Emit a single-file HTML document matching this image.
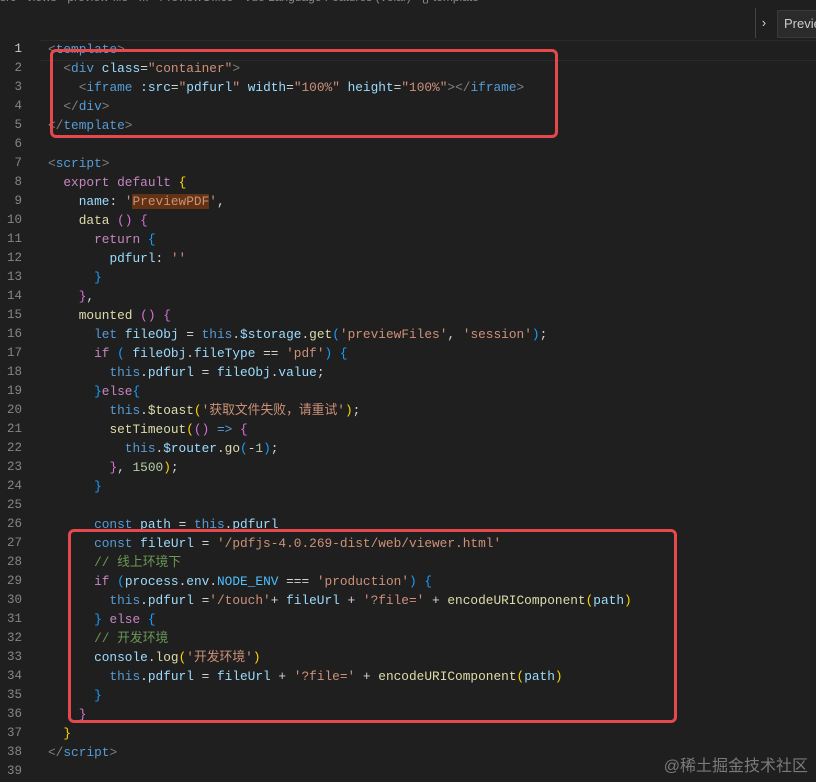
<!DOCTYPE html>
<html><head><meta charset="utf-8"><style>
body{margin:0;width:816px;height:782px;background:#1f1f1f;overflow:hidden;position:relative;font-family:"Liberation Mono","Noto Sans CJK SC",monospace;font-size:12.8px;}
.ln{position:absolute;left:0;width:22px;text-align:right;color:#858585;height:19px;line-height:19px;font-size:12.5px}
.c{position:absolute;left:48px;white-space:pre;color:#d4d4d4;height:19px;line-height:19px;}
.t{color:#808080}.tg{color:#569cd6}.a{color:#9cdcfe}.s{color:#ce9178}.k{color:#569cd6}.p{color:#c586c0}.f{color:#dcdcaa}.cm{color:#6a9955}.n{color:#b5cea8}.v{color:#9cdcfe}
.y{color:#ffd700}.m{color:#da70d6}.b{color:#179fff}
.box{position:absolute;border:3px solid #e5484d;border-radius:6px;}
</style></head><body>
<div style="position:absolute;left:0;top:-10px;color:#8a8a8a;font-family:'Liberation Sans',sans-serif;font-size:12px;white-space:nowrap">src › views › preview-file › ... › PreviewOffice › Vue Language Features (Volar) › {} template</div>
<div style="position:absolute;left:755px;top:8px;width:1px;height:30px;background:#444"></div>
<div style="position:absolute;left:760px;top:16px;color:#ccc;font-size:13px">›</div>
<div style="position:absolute;left:777px;top:10px;width:45px;height:26px;background:#2b2b2b;border:1px solid #3a3a3a;color:#ccc;font-family:'Liberation Sans',sans-serif;font-size:13px;line-height:26px;padding-left:6px">Preview</div>
<div style="position:absolute;left:40px;top:40px;width:776px;height:19px;border-top:1px solid #2a2a2a;border-bottom:1px solid #2a2a2a"></div>
<div class="ln" style="top:40px;color:#ccc">1</div><div class="c" style="top:40px"><span class="t">&lt;</span><span class="tg">template</span><span class="t">&gt;</span></div>
<div class="ln" style="top:59px">2</div><div class="c" style="top:59px">  <span class="t">&lt;</span><span class="tg">div</span> <span class="a">class</span>=<span class="s">"container"</span><span class="t">&gt;</span></div>
<div class="ln" style="top:78px">3</div><div class="c" style="top:78px">    <span class="t">&lt;</span><span class="tg">iframe</span> <span class="a">:src</span>=<span class="s">"</span><span class="v">pdfurl</span><span class="s">"</span> <span class="a">width</span>=<span class="s">"100%"</span> <span class="a">height</span>=<span class="s">"100%"</span><span class="t">&gt;&lt;/</span><span class="tg">iframe</span><span class="t">&gt;</span></div>
<div class="ln" style="top:97px">4</div><div class="c" style="top:97px">  <span class="t">&lt;/</span><span class="tg">div</span><span class="t">&gt;</span></div>
<div class="ln" style="top:116px">5</div><div class="c" style="top:116px"><span class="t">&lt;/</span><span class="tg">template</span><span class="t">&gt;</span></div>
<div class="ln" style="top:135px">6</div>
<div class="ln" style="top:154px">7</div><div class="c" style="top:154px"><span class="t">&lt;</span><span class="tg">script</span><span class="t">&gt;</span></div>
<div class="ln" style="top:173px">8</div><div class="c" style="top:173px">  <span class="p">export</span> <span class="p">default</span> <span class="y">{</span></div>
<div class="ln" style="top:192px">9</div><div class="c" style="top:192px">    <span class="a">name</span>: <span class="s">'<span style="background:#613214">PreviewPDF</span>'</span>,</div>
<div class="ln" style="top:211px">10</div><div class="c" style="top:211px">    <span class="f">data</span> <span class="m">()</span> <span class="m">{</span></div>
<div class="ln" style="top:230px">11</div><div class="c" style="top:230px">      <span class="p">return</span> <span class="b">{</span></div>
<div class="ln" style="top:249px">12</div><div class="c" style="top:249px">        <span class="a">pdfurl</span>: <span class="s">''</span></div>
<div class="ln" style="top:268px">13</div><div class="c" style="top:268px">      <span class="b">}</span></div>
<div class="ln" style="top:287px">14</div><div class="c" style="top:287px">    <span class="m">}</span>,</div>
<div class="ln" style="top:306px">15</div><div class="c" style="top:306px">    <span class="f">mounted</span> <span class="m">()</span> <span class="m">{</span></div>
<div class="ln" style="top:325px">16</div><div class="c" style="top:325px">      <span class="k">let</span> <span class="v">fileObj</span> = <span class="k">this</span>.<span class="v">$storage</span>.<span class="f">get</span><span class="b">(</span><span class="s">'previewFiles'</span>, <span class="s">'session'</span><span class="b">)</span>;</div>
<div class="ln" style="top:344px">17</div><div class="c" style="top:344px">      <span class="p">if</span> <span class="b">(</span> <span class="v">fileObj</span>.<span class="v">fileType</span> == <span class="s">'pdf'</span><span class="b">)</span> <span class="b">{</span></div>
<div class="ln" style="top:363px">18</div><div class="c" style="top:363px">        <span class="k">this</span>.<span class="v">pdfurl</span> = <span class="v">fileObj</span>.<span class="v">value</span>;</div>
<div class="ln" style="top:382px">19</div><div class="c" style="top:382px">      <span class="b">}</span><span class="p">else</span><span class="b">{</span></div>
<div class="ln" style="top:401px">20</div><div class="c" style="top:401px">        <span class="k">this</span>.<span class="f">$toast</span><span class="y">(</span><span class="s">'获取文件失败，请重试'</span><span class="y">)</span>;</div>
<div class="ln" style="top:420px">21</div><div class="c" style="top:420px">        <span class="f">setTimeout</span><span class="y">(</span><span class="m">()</span> <span class="k">=&gt;</span> <span class="m">{</span></div>
<div class="ln" style="top:439px">22</div><div class="c" style="top:439px">          <span class="k">this</span>.<span class="v">$router</span>.<span class="f">go</span><span class="b">(</span>-<span class="n">1</span><span class="b">)</span>;</div>
<div class="ln" style="top:458px">23</div><div class="c" style="top:458px">        <span class="m">}</span>, <span class="n">1500</span><span class="y">)</span>;</div>
<div class="ln" style="top:477px">24</div><div class="c" style="top:477px">      <span class="b">}</span></div>
<div class="ln" style="top:496px">25</div>
<div class="ln" style="top:515px">26</div><div class="c" style="top:515px">      <span class="k">const</span> <span class="v">path</span> = <span class="k">this</span>.<span class="v">pdfurl</span></div>
<div class="ln" style="top:534px">27</div><div class="c" style="top:534px">      <span class="k">const</span> <span class="v">fileUrl</span> = <span class="s">'/pdfjs-4.0.269-dist/web/viewer.html'</span></div>
<div class="ln" style="top:553px">28</div><div class="c" style="top:553px">      <span class="cm">// 线上环境下</span></div>
<div class="ln" style="top:572px">29</div><div class="c" style="top:572px">      <span class="p">if</span> <span class="b">(</span><span class="v">process</span>.<span class="v">env</span>.<span class="a" style="color:#4fc1ff">NODE_ENV</span> === <span class="s">'production'</span><span class="b">)</span> <span class="b">{</span></div>
<div class="ln" style="top:591px">30</div><div class="c" style="top:591px">        <span class="k">this</span>.<span class="v">pdfurl</span> =<span class="s">'/touch'</span>+ <span class="v">fileUrl</span> + <span class="s">'?file='</span> + <span class="f">encodeURIComponent</span><span class="y">(</span><span class="v">path</span><span class="y">)</span></div>
<div class="ln" style="top:610px">31</div><div class="c" style="top:610px">      <span class="b">}</span> <span class="p">else</span> <span class="b">{</span></div>
<div class="ln" style="top:629px">32</div><div class="c" style="top:629px">      <span class="cm">// 开发环境</span></div>
<div class="ln" style="top:648px">33</div><div class="c" style="top:648px">      <span class="v">console</span>.<span class="f">log</span><span class="y">(</span><span class="s">'开发环境'</span><span class="y">)</span></div>
<div class="ln" style="top:667px">34</div><div class="c" style="top:667px">        <span class="k">this</span>.<span class="v">pdfurl</span> = <span class="v">fileUrl</span> + <span class="s">'?file='</span> + <span class="f">encodeURIComponent</span><span class="y">(</span><span class="v">path</span><span class="y">)</span></div>
<div class="ln" style="top:686px">35</div><div class="c" style="top:686px">      <span class="b">}</span></div>
<div class="ln" style="top:705px">36</div><div class="c" style="top:705px">    <span class="m">}</span></div>
<div class="ln" style="top:724px">37</div><div class="c" style="top:724px">  <span class="y">}</span></div>
<div class="ln" style="top:743px">38</div><div class="c" style="top:743px"><span class="t">&lt;/</span><span class="tg">script</span><span class="t">&gt;</span></div>
<div class="ln" style="top:762px">39</div>
<div class="box" style="left:50px;top:49px;width:502px;height:83px"></div>
<div class="box" style="left:68px;top:529px;width:603px;height:188px"></div>
<div style="position:absolute;right:8px;top:752px;color:#7a7a7a;font-family:'Liberation Sans','Noto Sans CJK SC',sans-serif;font-size:16px">@稀土掘金技术社区</div>
</body></html>
